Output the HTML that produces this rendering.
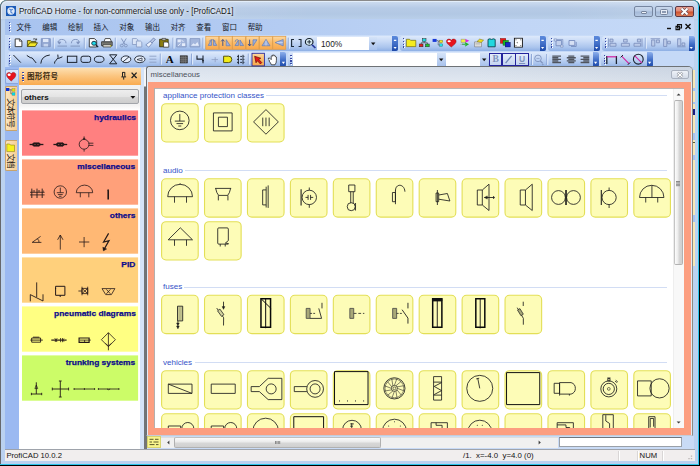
<!DOCTYPE html>
<html><head><meta charset="utf-8"><title>ProfiCAD</title>
<style>
html,body{margin:0;padding:0}
body{width:700px;height:466px;position:relative;overflow:hidden;background:#fff;font-family:"Liberation Sans",sans-serif;font-size:9px;color:#222}
div{box-sizing:border-box}
svg{position:absolute;left:0;top:0;overflow:visible}
.t{position:absolute;white-space:nowrap;line-height:1}
</style></head><body>
<div style="position:absolute;left:0px;top:0px;width:700px;height:466px;background:#000;border-radius:7px 7px 0 0;"></div><div style="position:absolute;left:0px;top:0px;width:699px;height:465px;background:#2cc4ea;border-radius:7px 6px 0 0;"></div><div style="position:absolute;left:0px;top:0px;width:698px;height:464px;background:linear-gradient(#cfddf0,#b6cbe6 7px,#b2c8e4 13px,#bbd0ea 19px,#bdd3ef 20px,#bad1f0);border-radius:7px 6px 0 0;border-left:1px solid #66686c;border-top:1px solid #8a8a8a;"></div><div style="position:absolute;left:1px;top:1px;width:697px;height:18px;border-top:1px solid #e3eefa;border-left:1px solid #dfeaf8;border-radius:6px 5px 0 0;background:linear-gradient(90deg,rgba(255,255,255,.22),rgba(255,255,255,0) 45%,rgba(255,255,255,0) 80%,rgba(255,255,255,.12));"></div><div style="position:absolute;left:6px;top:6px;width:10px;height:10px;background:#1a5ab8;border:0;"><svg width="10" height="10"><circle cx="5" cy="5" r="3.7" fill="#dfe9f8"/><path d="M3.4 2.8l1.6 1.4 1.8-1M5 4.2l-.2 2-1.8.8M4.800 6.200l1.800 1.200" stroke="#4a80d0" stroke-width="1.1" fill="none"/><circle cx="3.8" cy="6.6" r=".8" fill="#fff"/></svg></div><div class="t" style="left:19px;top:7px;font-size:8.6px;color:#141414;transform:scaleX(0.934);transform-origin:0 0;text-shadow:0 0 3px #fff,0 0 5px #eef4fc;">ProfiCAD Home - for non-commercial use only - [ProfiCAD1]</div><div style="position:absolute;left:634.3px;top:6.2px;width:18.4px;height:10.4px;border:1px solid #7686a0;border-radius:2px;background:linear-gradient(#c9d8ec,#b9cbe4 48%,#a4b9d8 52%,#b4c8e2);"><div style="position:absolute;left:5.6px;top:4.2px;width:6px;height:3px;background:#eef2f8;border:1px solid #76849c;border-radius:1px"></div></div><div style="position:absolute;left:654.5px;top:6.2px;width:18.4px;height:10.4px;border:1px solid #7686a0;border-radius:2px;background:linear-gradient(#c9d8ec,#b9cbe4 48%,#a4b9d8 52%,#b4c8e2);"><div style="position:absolute;left:4.6px;top:1.6px;width:8px;height:6px;background:#e6ecf5;border:1px solid #76849c;border-radius:1.5px"></div><div style="position:absolute;left:6.6px;top:3.6px;width:4px;height:2px;background:#8c9ab2"></div></div><div style="position:absolute;left:674.8px;top:6.2px;width:18.8px;height:10.4px;border:1px solid #5a3642;border-radius:2px;background:linear-gradient(#eba393,#e08a76 48%,#cf4f2c 52%,#de7e58);"><svg width="17" height="9"><path d="M5.5 1.5l6 6M11.5 1.5l-6 6" stroke="#6a4a52" stroke-width="3.2"/><path d="M5.5 1.5l6 6M11.5 1.5l-6 6" stroke="#fff" stroke-width="1.9"/></svg></div><div style="position:absolute;left:5px;top:19px;width:689px;height:48px;background:#c5d9f7;"></div><div style="position:absolute;left:5px;top:19px;width:689px;height:16.5px;background:linear-gradient(90deg,#a8c3ef,#b4ccf2 40%,#c1d6f6 75%,#c5d9f7);"></div><div style="position:absolute;left:5px;top:35px;width:689px;height:1px;background:#c9dcf8;"></div><div style="position:absolute;left:9.6px;top:22.60px;width:1.3px;height:1.3px;background:#fff"></div><div style="position:absolute;left:9px;top:22.00px;width:1.3px;height:1.3px;background:#3a4aa4"></div><div style="position:absolute;left:9.6px;top:25.27px;width:1.3px;height:1.3px;background:#fff"></div><div style="position:absolute;left:9px;top:24.67px;width:1.3px;height:1.3px;background:#3a4aa4"></div><div style="position:absolute;left:9.6px;top:27.94px;width:1.3px;height:1.3px;background:#fff"></div><div style="position:absolute;left:9px;top:27.34px;width:1.3px;height:1.3px;background:#3a4aa4"></div><div style="position:absolute;left:9.6px;top:30.61px;width:1.3px;height:1.3px;background:#fff"></div><div style="position:absolute;left:9px;top:30.01px;width:1.3px;height:1.3px;background:#3a4aa4"></div><svg width="700" height="466" font-family='"Liberation Sans","Noto Sans CJK SC",sans-serif' font-size="7.5" fill="#161a28"><text x="16.6" y="29.7">文件</text><text x="42.27" y="29.7">编辑</text><text x="67.94" y="29.7">绘制</text><text x="93.61" y="29.7">插入</text><text x="119.28" y="29.7">对象</text><text x="144.95" y="29.7">输出</text><text x="170.62" y="29.7">对齐</text><text x="196.29" y="29.7">查看</text><text x="221.96" y="29.7">窗口</text><text x="247.63" y="29.7">帮助</text></svg><svg width="700" height="466"><path d="M667 28.5h4" stroke="#111" stroke-width="1.4"/><path d="M677.5 24.6h4v3.4h-4zM676 26.4h3.6v3.2h-3.6z" stroke="#111" stroke-width="1.1" fill="#c5d9f7"/><path d="M685.5 24l5 5M690.5 24l-5 5" stroke="#111" stroke-width="1.4"/></svg><div style="position:absolute;left:7.5px;top:35.8px;width:390.5px;height:15.7px;border-radius:3px 2px 2px 3px;background:linear-gradient(#dde9fb,#c8daf6 35%,#abc5ed 75%,#8eafe4);overflow:hidden;"><div style="position:absolute;right:0;top:0;width:6.4px;height:15.7px;background:linear-gradient(#5c8adc,#3e6cc6 55%,#1c48a8)"></div><svg width="390.5" height="15.7"><path d="M385.9 4.4h2.4" stroke="#fff" stroke-width="1.1"/><path d="M385.5 10.899999999999999h3.2l-1.6 2.1z" fill="#fff"/></svg></div><div style="position:absolute;left:400px;top:35.8px;width:146px;height:15.7px;border-radius:3px 2px 2px 3px;background:linear-gradient(#dde9fb,#c8daf6 35%,#abc5ed 75%,#8eafe4);overflow:hidden;"><div style="position:absolute;right:0;top:0;width:6.4px;height:15.7px;background:linear-gradient(#5c8adc,#3e6cc6 55%,#1c48a8)"></div><svg width="146" height="15.7"><path d="M141.4 4.4h2.4" stroke="#fff" stroke-width="1.1"/><path d="M141 10.899999999999999h3.2l-1.6 2.1z" fill="#fff"/></svg></div><div style="position:absolute;left:548px;top:35.8px;width:52px;height:15.7px;border-radius:3px 2px 2px 3px;background:linear-gradient(#dde9fb,#c8daf6 35%,#abc5ed 75%,#8eafe4);overflow:hidden;"><div style="position:absolute;right:0;top:0;width:6.4px;height:15.7px;background:linear-gradient(#5c8adc,#3e6cc6 55%,#1c48a8)"></div><svg width="52" height="15.7"><path d="M47.4 4.4h2.4" stroke="#fff" stroke-width="1.1"/><path d="M47 10.899999999999999h3.2l-1.6 2.1z" fill="#fff"/></svg></div><div style="position:absolute;left:602.4px;top:35.8px;width:92.6px;height:15.7px;border-radius:3px 2px 2px 3px;background:linear-gradient(#dde9fb,#c8daf6 35%,#abc5ed 75%,#8eafe4);overflow:hidden;"><div style="position:absolute;right:0;top:0;width:6.4px;height:15.7px;background:linear-gradient(#8eb0ec,#3e6cc6 55%,#1c48a8)"></div><svg width="92.6" height="15.7"><path d="M88.0 4.4h2.4" stroke="#fff" stroke-width="0"/><path d="M87.6 10.899999999999999h3.2l-1.6 2.1z" fill="#fff"/></svg></div><div style="position:absolute;left:7.5px;top:52.4px;width:278.8px;height:14.6px;border-radius:3px 2px 2px 3px;background:linear-gradient(#dde9fb,#c8daf6 35%,#abc5ed 75%,#8eafe4);overflow:hidden;"><div style="position:absolute;right:0;top:0;width:6.4px;height:14.6px;background:linear-gradient(#8eb0ec,#3e6cc6 55%,#1c48a8)"></div><svg width="278.8" height="14.6"><path d="M274.2 4.4h2.4" stroke="#fff" stroke-width="0"/><path d="M273.8 9.8h3.2l-1.6 2.1z" fill="#fff"/></svg></div><div style="position:absolute;left:288px;top:52.4px;width:311px;height:14.6px;border-radius:3px 2px 2px 3px;background:linear-gradient(#dde9fb,#c8daf6 35%,#abc5ed 75%,#8eafe4);overflow:hidden;"><div style="position:absolute;right:0;top:0;width:6.4px;height:14.6px;background:linear-gradient(#8eb0ec,#3e6cc6 55%,#1c48a8)"></div><svg width="311" height="14.6"><path d="M306.4 4.4h2.4" stroke="#fff" stroke-width="0"/><path d="M306 9.8h3.2l-1.6 2.1z" fill="#fff"/></svg></div><div style="position:absolute;left:601px;top:52.4px;width:52px;height:14.6px;border-radius:3px 2px 2px 3px;background:linear-gradient(#dde9fb,#c8daf6 35%,#abc5ed 75%,#8eafe4);overflow:hidden;"><div style="position:absolute;right:0;top:0;width:6.4px;height:14.6px;background:linear-gradient(#8eb0ec,#3e6cc6 55%,#1c48a8)"></div><svg width="52" height="14.6"><path d="M47.4 4.4h2.4" stroke="#fff" stroke-width="0"/><path d="M47 9.8h3.2l-1.6 2.1z" fill="#fff"/></svg></div><div style="position:absolute;left:9.799999999999999px;top:38.80px;width:1.3px;height:1.3px;background:#fff"></div><div style="position:absolute;left:9.2px;top:38.20px;width:1.3px;height:1.3px;background:#3a4aa4"></div><div style="position:absolute;left:9.799999999999999px;top:41.55px;width:1.3px;height:1.3px;background:#fff"></div><div style="position:absolute;left:9.2px;top:40.95px;width:1.3px;height:1.3px;background:#3a4aa4"></div><div style="position:absolute;left:9.799999999999999px;top:44.30px;width:1.3px;height:1.3px;background:#fff"></div><div style="position:absolute;left:9.2px;top:43.70px;width:1.3px;height:1.3px;background:#3a4aa4"></div><div style="position:absolute;left:9.799999999999999px;top:47.05px;width:1.3px;height:1.3px;background:#fff"></div><div style="position:absolute;left:9.2px;top:46.45px;width:1.3px;height:1.3px;background:#3a4aa4"></div><div style="position:absolute;left:9.799999999999999px;top:55.80px;width:1.3px;height:1.3px;background:#fff"></div><div style="position:absolute;left:9.2px;top:55.20px;width:1.3px;height:1.3px;background:#3a4aa4"></div><div style="position:absolute;left:9.799999999999999px;top:58.40px;width:1.3px;height:1.3px;background:#fff"></div><div style="position:absolute;left:9.2px;top:57.80px;width:1.3px;height:1.3px;background:#3a4aa4"></div><div style="position:absolute;left:9.799999999999999px;top:61.00px;width:1.3px;height:1.3px;background:#fff"></div><div style="position:absolute;left:9.2px;top:60.40px;width:1.3px;height:1.3px;background:#3a4aa4"></div><div style="position:absolute;left:9.799999999999999px;top:63.60px;width:1.3px;height:1.3px;background:#fff"></div><div style="position:absolute;left:9.2px;top:63.00px;width:1.3px;height:1.3px;background:#3a4aa4"></div><div style="position:absolute;left:403.6px;top:38.80px;width:1.3px;height:1.3px;background:#fff"></div><div style="position:absolute;left:403px;top:38.20px;width:1.3px;height:1.3px;background:#3a4aa4"></div><div style="position:absolute;left:403.6px;top:41.55px;width:1.3px;height:1.3px;background:#fff"></div><div style="position:absolute;left:403px;top:40.95px;width:1.3px;height:1.3px;background:#3a4aa4"></div><div style="position:absolute;left:403.6px;top:44.30px;width:1.3px;height:1.3px;background:#fff"></div><div style="position:absolute;left:403px;top:43.70px;width:1.3px;height:1.3px;background:#3a4aa4"></div><div style="position:absolute;left:403.6px;top:47.05px;width:1.3px;height:1.3px;background:#fff"></div><div style="position:absolute;left:403px;top:46.45px;width:1.3px;height:1.3px;background:#3a4aa4"></div><div style="position:absolute;left:551.6px;top:38.80px;width:1.3px;height:1.3px;background:#fff"></div><div style="position:absolute;left:551px;top:38.20px;width:1.3px;height:1.3px;background:#3a4aa4"></div><div style="position:absolute;left:551.6px;top:41.55px;width:1.3px;height:1.3px;background:#fff"></div><div style="position:absolute;left:551px;top:40.95px;width:1.3px;height:1.3px;background:#3a4aa4"></div><div style="position:absolute;left:551.6px;top:44.30px;width:1.3px;height:1.3px;background:#fff"></div><div style="position:absolute;left:551px;top:43.70px;width:1.3px;height:1.3px;background:#3a4aa4"></div><div style="position:absolute;left:551.6px;top:47.05px;width:1.3px;height:1.3px;background:#fff"></div><div style="position:absolute;left:551px;top:46.45px;width:1.3px;height:1.3px;background:#3a4aa4"></div><div style="position:absolute;left:605.6px;top:38.80px;width:1.3px;height:1.3px;background:#fff"></div><div style="position:absolute;left:605px;top:38.20px;width:1.3px;height:1.3px;background:#3a4aa4"></div><div style="position:absolute;left:605.6px;top:41.55px;width:1.3px;height:1.3px;background:#fff"></div><div style="position:absolute;left:605px;top:40.95px;width:1.3px;height:1.3px;background:#3a4aa4"></div><div style="position:absolute;left:605.6px;top:44.30px;width:1.3px;height:1.3px;background:#fff"></div><div style="position:absolute;left:605px;top:43.70px;width:1.3px;height:1.3px;background:#3a4aa4"></div><div style="position:absolute;left:605.6px;top:47.05px;width:1.3px;height:1.3px;background:#fff"></div><div style="position:absolute;left:605px;top:46.45px;width:1.3px;height:1.3px;background:#3a4aa4"></div><div style="position:absolute;left:290.90000000000003px;top:55.80px;width:1.3px;height:1.3px;background:#fff"></div><div style="position:absolute;left:290.3px;top:55.20px;width:1.3px;height:1.3px;background:#3a4aa4"></div><div style="position:absolute;left:290.90000000000003px;top:58.40px;width:1.3px;height:1.3px;background:#fff"></div><div style="position:absolute;left:290.3px;top:57.80px;width:1.3px;height:1.3px;background:#3a4aa4"></div><div style="position:absolute;left:290.90000000000003px;top:61.00px;width:1.3px;height:1.3px;background:#fff"></div><div style="position:absolute;left:290.3px;top:60.40px;width:1.3px;height:1.3px;background:#3a4aa4"></div><div style="position:absolute;left:290.90000000000003px;top:63.60px;width:1.3px;height:1.3px;background:#fff"></div><div style="position:absolute;left:290.3px;top:63.00px;width:1.3px;height:1.3px;background:#3a4aa4"></div><div style="position:absolute;left:604.6px;top:55.80px;width:1.3px;height:1.3px;background:#fff"></div><div style="position:absolute;left:604px;top:55.20px;width:1.3px;height:1.3px;background:#3a4aa4"></div><div style="position:absolute;left:604.6px;top:58.40px;width:1.3px;height:1.3px;background:#fff"></div><div style="position:absolute;left:604px;top:57.80px;width:1.3px;height:1.3px;background:#3a4aa4"></div><div style="position:absolute;left:604.6px;top:61.00px;width:1.3px;height:1.3px;background:#fff"></div><div style="position:absolute;left:604px;top:60.40px;width:1.3px;height:1.3px;background:#3a4aa4"></div><div style="position:absolute;left:604.6px;top:63.60px;width:1.3px;height:1.3px;background:#fff"></div><div style="position:absolute;left:604px;top:63.00px;width:1.3px;height:1.3px;background:#3a4aa4"></div><div style="position:absolute;left:317px;top:37px;width:52px;height:12.6px;background:#fff;"></div><div style="position:absolute;left:369px;top:37px;width:8px;height:12.6px;background:linear-gradient(#d5e3f8,#a8c2ec);"><svg width="8" height="13"><path d="M2 5.6h4.4l-2.2 2.6z" fill="#111"/></svg></div><div class="t" style="left:321px;top:39.6px;font-size:8.3px;color:#222">100%</div><div style="position:absolute;left:293px;top:53px;width:144px;height:13px;background:#fff;"></div><div style="position:absolute;left:437px;top:53px;width:8px;height:13px;background:linear-gradient(#d5e3f8,#a8c2ec);"><svg width="8" height="13"><path d="M2 5.6h4.4l-2.2 2.6z" fill="#111"/></svg></div><div style="position:absolute;left:446px;top:53px;width:34px;height:13px;background:#fff;"></div><div style="position:absolute;left:480px;top:53px;width:8px;height:13px;background:linear-gradient(#d5e3f8,#a8c2ec);"><svg width="8" height="13"><path d="M2 5.6h4.4l-2.2 2.6z" fill="#111"/></svg></div><div style="position:absolute;left:293px;top:66px;width:196px;height:1px;background:#8a8d93;"></div><div style="position:absolute;left:5px;top:67px;width:14px;height:382px;background:#9bb9f1;"></div><div style="position:absolute;left:19px;top:67px;width:129px;height:382px;background:#c8daf5;"></div><div style="position:absolute;left:5px;top:69px;width:13px;height:15px;background:linear-gradient(#dfe9fb,#b9cff4);border:1px solid #8aa6dc;border-right:0;border-radius:2px 0 0 2px;"></div><svg width="700" height="466"><g transform="translate(6.3,72) scale(0.98)"><path d="M5 9.2C1.5 6.3 0.3 4.6 0.3 2.9 0.3 1.4 1.4 0.4 2.7 0.4 3.7 0.4 4.5 1 5 1.8 5.5 1 6.3 0.4 7.3 0.4 8.6 0.4 9.7 1.4 9.7 2.9 9.7 4.6 8.5 6.3 5 9.2z" fill="#e8121c" stroke="#8c0a10" stroke-width="0.5"/><ellipse cx="2.9" cy="2.8" rx="1.6" ry="1.2" fill="#fff"/></g></svg><div style="position:absolute;left:4.8px;top:86px;width:12.2px;height:44.6px;background:linear-gradient(90deg,#fbe3bd,#f6cf95);border:1px solid #c9a36a;border-right:0;border-radius:2px 0 0 2px;"></div><svg width="700" height="466"><rect x="6" y="88" width="3.4" height="3" fill="#1030d0"/><rect x="12" y="88.6" width="3" height="2.8" fill="#e8e000" stroke="#666" stroke-width=".3"/><rect x="12" y="92.6" width="3" height="2.8" fill="#00e0e8" stroke="#666" stroke-width=".3"/><path d="M9.4 89.6h1.4v4.200h1.200M10.800 89.900h1.200" stroke="#333" stroke-width=".5" fill="none"/><g transform="translate(15.5,98.2) rotate(90)"><text x="0 7.15 14.3 21.45" y="7.2" font-size="8.2" fill="#2a2418" font-family='"Liberation Sans","Noto Sans CJK SC",sans-serif'>文本符号</text></g></svg><div style="position:absolute;left:4.8px;top:140px;width:12.2px;height:31.2px;background:linear-gradient(90deg,#fbe3bd,#f6cf95);border:1px solid #c9a36a;border-right:0;border-radius:2px 0 0 2px;"></div><svg width="700" height="466"><path d="M6.8 144h2.8l.9 1.100h4v6.500h-7.700z" fill="#f6f01c" stroke="#8a8416" stroke-width=".6"/><g transform="translate(15.5,153.4) rotate(90)"><text x="0 7.15" y="7.2" font-size="8.2" fill="#2a2418" font-family='"Liberation Sans","Noto Sans CJK SC",sans-serif'>文档</text></g></svg><div style="position:absolute;left:19px;top:68px;width:120.6px;height:381px;background:#fff;"></div><div style="position:absolute;left:139.6px;top:68px;width:4.8px;height:381px;background:#d5e3f7;"></div><div style="position:absolute;left:144px;top:67px;width:2.6px;height:382px;background:linear-gradient(#dfe6f2,#dfe6f2 2px,#f4f6fa 3px,#f4f6fa 19px,#727476 20px,#727476);"></div><div style="position:absolute;left:19px;top:84.5px;width:120.6px;height:25px;background:linear-gradient(#f1f1f1,#f3f3f3 80%,#fff);"></div><div style="position:absolute;left:19px;top:68px;width:122.2px;height:16.5px;background:linear-gradient(#fde0b2,#fbc681 45%,#f9ab50);"></div><div style="position:absolute;left:22.900000000000002px;top:72.60px;width:1.3px;height:1.3px;background:#fff"></div><div style="position:absolute;left:22.3px;top:72.00px;width:1.3px;height:1.3px;background:#3a4aa4"></div><div style="position:absolute;left:22.900000000000002px;top:75.27px;width:1.3px;height:1.3px;background:#fff"></div><div style="position:absolute;left:22.3px;top:74.67px;width:1.3px;height:1.3px;background:#3a4aa4"></div><div style="position:absolute;left:22.900000000000002px;top:77.94px;width:1.3px;height:1.3px;background:#fff"></div><div style="position:absolute;left:22.3px;top:77.34px;width:1.3px;height:1.3px;background:#3a4aa4"></div><div style="position:absolute;left:22.900000000000002px;top:80.61px;width:1.3px;height:1.3px;background:#fff"></div><div style="position:absolute;left:22.3px;top:80.01px;width:1.3px;height:1.3px;background:#3a4aa4"></div><svg width="700" height="466"><text x="27 34.85 42.7 50.55" y="79.1" font-size="7.6" font-weight="bold" fill="#3a2a10" font-family='"Liberation Sans","Noto Sans CJK SC",sans-serif'>图形符号</text><path d="M122.5 72.2v4.6M124.8 72.2v4.6M122.5 72.4h2.3M121.3 76.9h4.8M123.7 77v2.6" stroke="#222" stroke-width="1" fill="none"/><path d="M131.6 72.6l5 5.4M136.6 72.6l-5 5.4" stroke="#222" stroke-width="1.3"/></svg><div style="position:absolute;left:20.8px;top:89px;width:118.2px;height:15.4px;border:1px solid #a2a5aa;border-radius:2px;background:linear-gradient(#eeeeee,#e4e4e4 50%,#d8d8d8 52%,#cdcdcd);"><div class="t" style="left:2.4px;top:3.6px;font-size:8px;font-weight:bold;color:#111">others</div><svg width="116" height="14"><path d="M108.4 6h5l-2.5 2.8z" fill="#111"/></svg></div><svg width="700" height="466"><rect x="22" y="110.4" width="116.1" height="45.3" fill="#ff8080"/><rect x="22" y="159.4" width="116.1" height="45.3" fill="#ffa07a"/><rect x="22" y="208.4" width="116.1" height="45.3" fill="#ffb874"/><rect x="22" y="257.4" width="116.1" height="45.3" fill="#ffd07c"/><rect x="22" y="306.4" width="116.1" height="45.3" fill="#ffff82"/><rect x="22" y="355.4" width="116.1" height="45.3" fill="#ccfc68"/></svg><div class="t" style="right:564.4px;top:113.8px;font-size:8px;font-weight:bold;color:#0a0a8c;transform:scaleX(1.05);transform-origin:100% 0;-webkit-text-stroke:0.25px #0a0a8c">hydraulics</div><div class="t" style="right:564.4px;top:162.8px;font-size:8px;font-weight:bold;color:#0a0a8c;transform:scaleX(1.05);transform-origin:100% 0;-webkit-text-stroke:0.25px #0a0a8c">miscellaneous</div><div class="t" style="right:564.4px;top:211.8px;font-size:8px;font-weight:bold;color:#0a0a8c;transform:scaleX(1.05);transform-origin:100% 0;-webkit-text-stroke:0.25px #0a0a8c">others</div><div class="t" style="right:564.4px;top:260.8px;font-size:8px;font-weight:bold;color:#0a0a8c;transform:scaleX(1.05);transform-origin:100% 0;-webkit-text-stroke:0.25px #0a0a8c">PID</div><div class="t" style="right:564.4px;top:309.8px;font-size:8px;font-weight:bold;color:#0a0a8c;transform:scaleX(1.05);transform-origin:100% 0;-webkit-text-stroke:0.25px #0a0a8c">pneumatic diagrams</div><div class="t" style="right:564.4px;top:358.8px;font-size:8px;font-weight:bold;color:#0a0a8c;transform:scaleX(1.05);transform-origin:100% 0;-webkit-text-stroke:0.25px #0a0a8c">trunking systems</div><div style="position:absolute;left:146.2px;top:66.4px;width:546.4px;height:369.4px;background:#e3ebf6;border:1px solid #6e7276;border-right-color:#8a8c84;border-bottom-color:#c4ccd8;border-radius:3px 5px 0 0;"></div><div style="position:absolute;left:147.5px;top:67.3px;width:544px;height:14.5px;background:linear-gradient(90deg,rgba(255,255,255,.12),rgba(255,255,255,0) 60%,rgba(120,135,160,.10)),linear-gradient(#d4dde9,#e1e8f1);border-radius:2px 4px 0 0;"></div><div class="t" style="left:150.6px;top:71px;font-size:7.8px;color:#4c515a">miscellaneous</div><div style="position:absolute;left:671px;top:69.8px;width:18px;height:9.6px;border:1px solid #aab2c0;border-radius:2px;background:linear-gradient(#eef2f8,#d5dce8);"><svg width="16" height="8"><path d="M5.6 1.6l4.8 4.6M10.4 1.6l-4.8 4.6" stroke="#8c929c" stroke-width="2.6"/><path d="M5.6 1.6l4.8 4.6M10.4 1.6l-4.8 4.6" stroke="#fff" stroke-width="1.2"/></svg></div><div style="position:absolute;left:147.5px;top:81.8px;width:543.5px;height:353.5px;background:#fc9e80;"></div><div style="position:absolute;left:153.8px;top:87.8px;width:530.5px;height:340px;background:#fff;"></div><div class="t" style="left:163px;top:91.6px;font-size:8.05px;color:#3553c8">appliance protection classes</div><div class="t" style="left:163px;top:167.3px;font-size:8.05px;color:#3553c8">audio</div><div class="t" style="left:163px;top:283.40000000000003px;font-size:8.05px;color:#3553c8">fuses</div><div class="t" style="left:163px;top:358.8px;font-size:8.05px;color:#3553c8">vehicles</div><svg width="700" height="466"><defs><clipPath id="cc"><rect x="154" y="88" width="519" height="339.9"/></clipPath></defs><g clip-path="url(#cc)"><rect x="266" y="95" width="401" height="1" fill="#d2ddf4"/><g transform="translate(161.10,103.20)"><rect x=".5" y=".5" width="36.6" height="38.3" rx="4.4" fill="#fdfcb7" stroke="#e3df56" stroke-width="1.1"/><g transform="translate(.4,.4)"><circle cx="18.3" cy="16.8" r="9.3" stroke="#1e1e1e" stroke-width="0.85" fill="none"/><path d="M18.3 10.5v7M13.3 17.5h10M15 20h6.6M16.8 22.4h3" stroke="#1e1e1e" stroke-width="0.85" fill="none" /></g></g><g transform="translate(204.03,103.20)"><rect x=".5" y=".5" width="36.6" height="38.3" rx="4.4" fill="#fdfcb7" stroke="#e3df56" stroke-width="1.1"/><g transform="translate(.4,.4)"><path d="M9 9.3h18.7v18h-18.7zM14 13.6h9v9.4h-9z" stroke="#1e1e1e" stroke-width="0.85" fill="none" /></g></g><g transform="translate(246.96,103.20)"><rect x=".5" y=".5" width="36.6" height="38.3" rx="4.4" fill="#fdfcb7" stroke="#e3df56" stroke-width="1.1"/><g transform="translate(.4,.4)"><path d="M18.6 6l12.4 12.3-12.4 12.3-12.4-12.3zM15.4 14v8.6M18.6 14v8.6M21.8 14v8.6" stroke="#1e1e1e" stroke-width="0.85" fill="none" /></g></g><rect x="185" y="170" width="482" height="1" fill="#d2ddf4"/><g transform="translate(161.10,178.30)"><rect x=".5" y=".5" width="36.6" height="38.3" rx="4.4" fill="#fdfcb7" stroke="#e3df56" stroke-width="1.1"/><g transform="translate(.4,.4)"><path d="M6.2 18A12.4 12.4 0 0 1 31 18zM13 18v6M25 18v6M18.6 5.6v-1" stroke="#1e1e1e" stroke-width="0.85" fill="none" /></g></g><g transform="translate(204.03,178.30)"><rect x=".5" y=".5" width="36.6" height="38.3" rx="4.4" fill="#fdfcb7" stroke="#e3df56" stroke-width="1.1"/><g transform="translate(.4,.4)"><path d="M10.7 9.7h16M11.2 9.7q1 5 3 7h9q2-2 3-7M13.9 16.7v5M23.5 16.7v5" stroke="#1e1e1e" stroke-width="0.85" fill="none" /></g></g><g transform="translate(246.96,178.30)"><rect x=".5" y=".5" width="36.6" height="38.3" rx="4.4" fill="#fdfcb7" stroke="#e3df56" stroke-width="1.1"/><g transform="translate(.4,.4)"><path d="M15.3 11.2h3.5v15h-3.5zM20.8 6.7v22.5M18.8 8v3.2M18.8 26.2v2.6" stroke="#1e1e1e" stroke-width="0.85" fill="none" /></g></g><g transform="translate(289.89,178.30)"><rect x=".5" y=".5" width="36.6" height="38.3" rx="4.4" fill="#fdfcb7" stroke="#e3df56" stroke-width="1.1"/><g transform="translate(.4,.4)"><path d="M10.8 10.5v16.2" stroke="#1e1e1e" stroke-width="1.1" fill="none" /><circle cx="19" cy="18.7" r="7.2" stroke="#1e1e1e" stroke-width="0.85" fill="none"/><path d="M17.8 16.2v5M20.3 16.2v5M15.2 18.7h2.6M20.3 18.7h2.6M19 8.8v2.7M19 25.9v3.2" stroke="#1e1e1e" stroke-width="0.85" fill="none" /></g></g><g transform="translate(332.82,178.30)"><rect x=".5" y=".5" width="36.6" height="38.3" rx="4.4" fill="#fdfcb7" stroke="#e3df56" stroke-width="1.1"/><g transform="translate(.4,.4)"><path d="M15.5 6.3h6.2v6.7h-6.2zM17.5 13v11.3M20 13v11.3M22.3 24.3v7.5" stroke="#1e1e1e" stroke-width="0.85" fill="none" /><circle cx="18" cy="28" r="4" stroke="#1e1e1e" stroke-width="0.85" fill="none"/></g></g><g transform="translate(375.75,178.30)"><rect x=".5" y=".5" width="36.6" height="38.3" rx="4.4" fill="#fdfcb7" stroke="#e3df56" stroke-width="1.1"/><g transform="translate(.4,.4)"><path d="M16.3 13.8h3v9.2h-3zM19.3 11.8v13.7M19.3 12.5c-.5-8 9-8 9.5.5" stroke="#1e1e1e" stroke-width="0.85" fill="none" /></g></g><g transform="translate(418.68,178.30)"><rect x=".5" y=".5" width="36.6" height="38.3" rx="4.4" fill="#fdfcb7" stroke="#e3df56" stroke-width="1.1"/><g transform="translate(.4,.4)"><path d="M17 14.3h2.6v8.7h-2.6zM18.3 11.3v15M19.6 16.3l8.7-1.5 2.5 7.5-11.2-1.8" stroke="#1e1e1e" stroke-width="0.85" fill="none" /></g></g><g transform="translate(461.61,178.30)"><rect x=".5" y=".5" width="36.6" height="38.3" rx="4.4" fill="#fdfcb7" stroke="#e3df56" stroke-width="1.1"/><g transform="translate(.4,.4)"><path d="M15.3 11.3h5v15h-5zM20.3 11.3l6.7-5.8v26.3l-6.7-5.5M22.3 18.8h10.5M31.6 17.3v3" stroke="#1e1e1e" stroke-width="0.85" fill="none" /><path d="M22.3 18.8l3-1.6v3.2z" stroke="#1e1e1e" stroke-width="0.4" fill="#1e1e1e" /></g></g><g transform="translate(504.54,178.30)"><rect x=".5" y=".5" width="36.6" height="38.3" rx="4.4" fill="#fdfcb7" stroke="#e3df56" stroke-width="1.1"/><g transform="translate(.4,.4)"><path d="M15.3 11.3h5.2v15h-5.2zM20.5 11.3l6.8-5.8v26.3l-6.8-5.5" stroke="#1e1e1e" stroke-width="0.85" fill="none" /></g></g><g transform="translate(547.47,178.30)"><rect x=".5" y=".5" width="36.6" height="38.3" rx="4.4" fill="#fdfcb7" stroke="#e3df56" stroke-width="1.1"/><g transform="translate(.4,.4)"><circle cx="10.6" cy="18.8" r="6.9" stroke="#1e1e1e" stroke-width="0.85" fill="none"/><circle cx="25.6" cy="18.8" r="6.9" stroke="#1e1e1e" stroke-width="0.85" fill="none"/><path d="M17.7 11.3v15M18.6 11.3v15" stroke="#1e1e1e" stroke-width="0.85" fill="none" /></g></g><g transform="translate(590.40,178.30)"><rect x=".5" y=".5" width="36.6" height="38.3" rx="4.4" fill="#fdfcb7" stroke="#e3df56" stroke-width="1.1"/><g transform="translate(.4,.4)"><path d="M10.5 11.3v15" stroke="#1e1e1e" stroke-width="1.1" fill="none" /><circle cx="18.3" cy="18.8" r="7.1" stroke="#1e1e1e" stroke-width="0.85" fill="none"/><path d="M18.3 8.8v2.9M18.3 25.9v3.4" stroke="#1e1e1e" stroke-width="0.85" fill="none" /></g></g><g transform="translate(633.33,178.30)"><rect x=".5" y=".5" width="36.6" height="38.3" rx="4.4" fill="#fdfcb7" stroke="#e3df56" stroke-width="1.1"/><g transform="translate(.4,.4)"><path d="M5.8 18.8A12.2 12.2 0 0 1 30.2 18.8zM18.2 6.6v12.2M12 18.8v5M24 18.8v5" stroke="#1e1e1e" stroke-width="0.85" fill="none" /></g></g><g transform="translate(161.10,221.20)"><rect x=".5" y=".5" width="36.6" height="38.3" rx="4.4" fill="#fdfcb7" stroke="#e3df56" stroke-width="1.1"/><g transform="translate(.4,.4)"><path d="M18.8 6.2l12.2 12H6.7zM13 18.2v6M25 18.2v6" stroke="#1e1e1e" stroke-width="0.85" fill="none" /></g></g><g transform="translate(204.03,221.20)"><rect x=".5" y=".5" width="36.6" height="38.3" rx="4.4" fill="#fdfcb7" stroke="#e3df56" stroke-width="1.1"/><g transform="translate(.4,.4)"><path d="M14.3 6.3h8.4q1.2 0 1.2 1.2v11.5l-3 2.5 3 .4v.6h-9.6q-1 0-1-1v-14.2q0-1 1-1zM15.8 22.5v2.4M20.8 22.5v2.4" stroke="#1e1e1e" stroke-width="0.85" fill="none" /></g></g><rect x="184" y="287" width="483" height="1" fill="#d2ddf4"/><g transform="translate(161.10,294.80)"><rect x=".5" y=".5" width="36.6" height="38.3" rx="4.4" fill="#fdfcb7" stroke="#e3df56" stroke-width="1.1"/><g transform="translate(.4,.4)"><path d="M16 11h5.2v14.700h-5.200z" stroke="#1e1e1e" stroke-width="0.85" fill="#d2d29c" /><path d="M17.700 11.600v13.600M19.400 11.600v13.600" stroke="#8c8c5c" stroke-width="0.5" fill="none" /><path d="M16.400 25.700v7.800" stroke="#1e1e1e" stroke-width="0.85" fill="none" /><path d="M14.900 27.800h3l-1.500 2.600zM14.900 30.800h3l-1.500 2.600z" stroke="#1e1e1e" stroke-width="0.3" fill="#1e1e1e" /></g></g><g transform="translate(204.03,294.80)"><rect x=".5" y=".5" width="36.6" height="38.3" rx="4.4" fill="#fdfcb7" stroke="#e3df56" stroke-width="1.1"/><g transform="translate(.4,.4)"><path d="M19.100 6.500v6M19.200 22.600l-.100 7.700M12.300 12.900l7 9.700" stroke="#1e1e1e" stroke-width="0.85" fill="none" /><path d="M17.600 11.400h3l-1.500 2.800z" stroke="#1e1e1e" stroke-width="0.3" fill="#1e1e1e" /><path d="M13.100 15.600l2.400-1.700 4 5.600-2.400 1.700z" stroke="#1e1e1e" stroke-width="0.75" fill="#d2d29c" /></g></g><g transform="translate(246.96,294.80)"><rect x=".5" y=".5" width="36.6" height="38.3" rx="4.4" fill="#fdfcb7" stroke="#e3df56" stroke-width="1.1"/><g transform="translate(.4,.4)"><path d="M13.6 3.6h9.6v28.4h-9.6z" stroke="#0a0a0a" stroke-width="1.5" fill="none" /><path d="M18.3 3.4v29.6M14.2 4l9.6 9.4" stroke="#0a0a0a" stroke-width="1.0" fill="none" /></g></g><g transform="translate(289.89,294.80)"><rect x=".5" y=".5" width="36.6" height="38.3" rx="4.4" fill="#fdfcb7" stroke="#e3df56" stroke-width="1.1"/><g transform="translate(.4,.4)"><path d="M15.900 13.200h3.900v10h-3.900z" stroke="#444" stroke-width="0.8" fill="#a8a878" /><path d="M19.800 18.200h5" stroke="#1e1e1e" stroke-width="0.8" fill="none" stroke-dasharray="2 1.200"/><path d="M19.800 23.200h11.500l-2.800-10M31.700 7.600v5.600" stroke="#1e1e1e" stroke-width="0.85" fill="none" /></g></g><g transform="translate(332.82,294.80)"><rect x=".5" y=".5" width="36.6" height="38.3" rx="4.4" fill="#fdfcb7" stroke="#e3df56" stroke-width="1.1"/><g transform="translate(.4,.4)"><path d="M16.600 13.200h3.900v10h-3.900z" stroke="#444" stroke-width="0.8" fill="#a8a878" /><path d="M20.500 18.200h10.600" stroke="#1e1e1e" stroke-width="0.8" fill="none" stroke-dasharray="2.800 1.800"/></g></g><g transform="translate(375.75,294.80)"><rect x=".5" y=".5" width="36.6" height="38.3" rx="4.4" fill="#fdfcb7" stroke="#e3df56" stroke-width="1.1"/><g transform="translate(.4,.4)"><path d="M16.500 13.200h4v10h-4z" stroke="#444" stroke-width="0.8" fill="#a8a878" /><path d="M20.500 18.200h5.400" stroke="#1e1e1e" stroke-width="0.8" fill="none" stroke-dasharray="2 1.200"/><path d="M25.900 14.500l5.900 8.400M31.800 7.600v5.600M31.800 22.900v5.500" stroke="#1e1e1e" stroke-width="0.9" fill="none" /></g></g><g transform="translate(418.68,294.80)"><rect x=".5" y=".5" width="36.6" height="38.3" rx="4.4" fill="#fdfcb7" stroke="#e3df56" stroke-width="1.1"/><g transform="translate(.4,.4)"><path d="M13.6 3.6h9.2v28.4h-9.2z" stroke="#0a0a0a" stroke-width="1.5" fill="none" /><path d="M13.4 3.4h9.4v2.4h-9.4z" stroke="#111" stroke-width="0.8" fill="#111" /><path d="M18.2 3.4v29.4" stroke="#111" stroke-width="0.9" fill="none" /></g></g><g transform="translate(461.61,294.80)"><rect x=".5" y=".5" width="36.6" height="38.3" rx="4.4" fill="#fdfcb7" stroke="#e3df56" stroke-width="1.1"/><g transform="translate(.4,.4)"><path d="M13.8 3.6h9v28.400h-9z" stroke="#0a0a0a" stroke-width="1.5" fill="none" /><path d="M18.2 3.4v29.8" stroke="#111" stroke-width="0.9" fill="none" /></g></g><g transform="translate(504.54,294.80)"><rect x=".5" y=".5" width="36.6" height="38.3" rx="4.4" fill="#fdfcb7" stroke="#e3df56" stroke-width="1.1"/><g transform="translate(.4,.4)"><path d="M18.3 6.5v4.3M18.4 23.3v6.2M12.3 12.5l6.2 10.8" stroke="#1e1e1e" stroke-width="0.85" fill="none" /><path d="M12.6 14.9l2.4-1.5 3.4 5.6-2.4 1.5z" stroke="#1e1e1e" stroke-width="0.7" fill="#a8a878" /></g></g><rect x="195" y="362" width="472" height="1" fill="#d2ddf4"/><g transform="translate(161.10,370.20)"><rect x=".5" y=".5" width="36.6" height="38.3" rx="4.4" fill="#fdfcb7" stroke="#e3df56" stroke-width="1.1"/><g transform="translate(.4,.4)"><path d="M6.8 13.5h23.7v9.3h-23.7zM6.8 13.5l23.7 9.3" stroke="#1e1e1e" stroke-width="0.85" fill="none" /></g></g><g transform="translate(204.03,370.20)"><rect x=".5" y=".5" width="36.6" height="38.3" rx="4.4" fill="#fdfcb7" stroke="#e3df56" stroke-width="1.1"/><g transform="translate(.4,.4)"><path d="M6.8 13.5h24v9.3h-24z" stroke="#1e1e1e" stroke-width="0.85" fill="none" /></g></g><g transform="translate(246.96,370.20)"><rect x=".5" y=".5" width="36.6" height="38.3" rx="4.4" fill="#fdfcb7" stroke="#e3df56" stroke-width="1.1"/><g transform="translate(.4,.4)"><path d="M3.8 16h8.2l8.8-8.3h13.7v21.3h-13.7l-8.8-8h-8.2z" stroke="#1e1e1e" stroke-width="0.85" fill="none" /><circle cx="23.8" cy="18.3" r="5" stroke="#1e1e1e" stroke-width="0.85" fill="none"/></g></g><g transform="translate(289.89,370.20)"><rect x=".5" y=".5" width="36.6" height="38.3" rx="4.4" fill="#fdfcb7" stroke="#e3df56" stroke-width="1.1"/><g transform="translate(.4,.4)"><path d="M16.6 16h-12.6v5h12.6" stroke="#1e1e1e" stroke-width="0.85" fill="none" /><circle cx="24.8" cy="18.3" r="8.4" stroke="#1e1e1e" stroke-width="0.85" fill="none"/><circle cx="24.8" cy="18.3" r="5" stroke="#1e1e1e" stroke-width="0.85" fill="none"/></g></g><g transform="translate(332.82,370.20)"><rect x=".5" y=".5" width="36.6" height="38.3" rx="4.4" fill="#fdfcb7" stroke="#e3df56" stroke-width="1.1"/><g transform="translate(.4,.4)"><path d="M1.3 1h33.5v33h-33.5z" stroke="#111" stroke-width="1.0" fill="none" /><path d="M6.3 30.3h.01M14.3 30.3h.01M22.3 30.3h.01M30.4 30.3h.01" stroke="#333" stroke-width="1.1" fill="none" stroke-linecap="round"/></g></g><g transform="translate(375.75,370.20)"><rect x=".5" y=".5" width="36.6" height="38.3" rx="4.4" fill="#fdfcb7" stroke="#e3df56" stroke-width="1.1"/><g transform="translate(.4,.4)"><circle cx="18.25" cy="17.75" r="10.6" stroke="#1e1e1e" stroke-width="0.85" fill="none"/><circle cx="18.25" cy="17.75" r="9.4" stroke="#1e1e1e" stroke-width="0.5" fill="none"/><circle cx="18.25" cy="17.75" r="3" stroke="#1e1e1e" stroke-width="0.7" fill="none"/><circle cx="18.25" cy="17.75" r="1.4" stroke="#1e1e1e" stroke-width="0.6" fill="none"/><path d="M21.25 17.75L27.55 20.13M20.85 19.25L25.12 24.46M19.75 20.35L20.84 26.99M18.25 20.75L15.87 27.05M16.75 20.35L11.54 24.62M15.65 19.25L9.01 20.34M15.25 17.75L8.95 15.37M15.65 16.25L11.38 11.04M16.75 15.15L15.66 8.51M18.25 14.75L20.63 8.45M19.75 15.15L24.96 10.88M20.85 16.25L27.49 15.16" stroke="#1e1e1e" stroke-width="0.55" fill="none" /></g></g><g transform="translate(418.68,370.20)"><rect x=".5" y=".5" width="36.6" height="38.3" rx="4.4" fill="#fdfcb7" stroke="#e3df56" stroke-width="1.1"/><g transform="translate(.4,.4)"><path d="M14.5 6h8v23.5h-8zM14.5 11.5h8M14.5 24.5h8M22.5 12l-7.4 3.8 7.4 4.2-7.4 4" stroke="#1e1e1e" stroke-width="0.85" fill="none" /></g></g><g transform="translate(461.61,370.20)"><rect x=".5" y=".5" width="36.6" height="38.3" rx="4.4" fill="#fdfcb7" stroke="#e3df56" stroke-width="1.1"/><g transform="translate(.4,.4)"><circle cx="17.75" cy="17.75" r="13" stroke="#1e1e1e" stroke-width="0.85" fill="none"/><path d="M17.75 17.75l-2-10M14.2 8.3l3-.7" stroke="#1e1e1e" stroke-width="0.85" fill="none" /></g></g><g transform="translate(504.54,370.20)"><rect x=".5" y=".5" width="36.6" height="38.3" rx="4.4" fill="#fdfcb7" stroke="#e3df56" stroke-width="1.1"/><g transform="translate(.4,.4)"><path d="M1.6 2h33.2v32h-33.2z" stroke="#111" stroke-width="1.0" fill="none" /></g></g><g transform="translate(547.47,370.20)"><rect x=".5" y=".5" width="36.6" height="38.3" rx="4.4" fill="#fdfcb7" stroke="#e3df56" stroke-width="1.1"/><g transform="translate(.4,.4)"><path d="M6.3 12.7h5.4v10h-5.4zM11.7 12h11.5a6 6 0 0 1 0 11.5h-11.5zM11.7 23.5v1.5M21.5 23.5v1.5" stroke="#1e1e1e" stroke-width="0.85" fill="none" /></g></g><g transform="translate(590.40,370.20)"><rect x=".5" y=".5" width="36.6" height="38.3" rx="4.4" fill="#fdfcb7" stroke="#e3df56" stroke-width="1.1"/><g transform="translate(.4,.4)"><circle cx="18" cy="18.3" r="8" stroke="#1e1e1e" stroke-width="0.85" fill="none"/><circle cx="18" cy="18.3" r="5.6" stroke="#1e1e1e" stroke-width="0.85" fill="none"/><circle cx="18" cy="18.3" r="1.4" stroke="#1e1e1e" stroke-width="0.6" fill="none"/><path d="M17 8h2.2v2.3h-2.2zM16.5 7.4h3.2M24.3 10.5l1.6 1.5M25 9.6l2 1.8" stroke="#1e1e1e" stroke-width="0.85" fill="none" /></g></g><g transform="translate(633.33,370.20)"><rect x=".5" y=".5" width="36.6" height="38.3" rx="4.4" fill="#fdfcb7" stroke="#e3df56" stroke-width="1.1"/><g transform="translate(.4,.4)"><path d="M3.8 10.3h13.7v15h-13.7z" stroke="#1e1e1e" stroke-width="0.85" fill="none" /><circle cx="25.8" cy="17.75" r="9.6" stroke="#1e1e1e" stroke-width="0.85" fill="none"/></g></g><g transform="translate(161.10,413.30)"><rect x=".5" y=".5" width="36.6" height="38.3" rx="4.4" fill="#fdfcb7" stroke="#e3df56" stroke-width="1.1"/><g transform="translate(.4,.4)"><path d="M6.8 12.3h12.4v10h-12.4z" stroke="#1e1e1e" stroke-width="0.85" fill="none" /><circle cx="26.3" cy="14.8" r="6" stroke="#1e1e1e" stroke-width="0.85" fill="none"/></g></g><g transform="translate(204.03,413.30)"><rect x=".5" y=".5" width="36.6" height="38.3" rx="4.4" fill="#fdfcb7" stroke="#e3df56" stroke-width="1.1"/><g transform="translate(.4,.4)"><path d="M6.8 12.3h12.4v10h-12.4z" stroke="#1e1e1e" stroke-width="0.85" fill="none" /><circle cx="26.3" cy="14.8" r="6" stroke="#1e1e1e" stroke-width="0.85" fill="none"/></g></g><g transform="translate(246.96,413.30)"><rect x=".5" y=".5" width="36.6" height="38.3" rx="4.4" fill="#fdfcb7" stroke="#e3df56" stroke-width="1.1"/><g transform="translate(.4,.4)"><circle cx="18.3" cy="17.3" r="12.8" stroke="#1e1e1e" stroke-width="0.85" fill="none"/></g></g><g transform="translate(289.89,413.30)"><rect x=".5" y=".5" width="36.6" height="38.3" rx="4.4" fill="#fdfcb7" stroke="#e3df56" stroke-width="1.1"/><g transform="translate(.4,.4)"><path d="M3.5 3h29.8v20h-29.8z" stroke="#111" stroke-width="1.0" fill="none" /></g></g><g transform="translate(332.82,413.30)"><rect x=".5" y=".5" width="36.6" height="38.3" rx="4.4" fill="#fdfcb7" stroke="#e3df56" stroke-width="1.1"/><g transform="translate(.4,.4)"><circle cx="18.8" cy="16" r="9.4" stroke="#1e1e1e" stroke-width="0.85" fill="none"/><path d="M18.5 9.5v6M17 10.2h3.6M17 12.5h2.6" stroke="#1e1e1e" stroke-width="0.85" fill="none" /></g></g><g transform="translate(375.75,413.30)"><rect x=".5" y=".5" width="36.6" height="38.3" rx="4.4" fill="#fdfcb7" stroke="#e3df56" stroke-width="1.1"/><g transform="translate(.4,.4)"><circle cx="18.3" cy="17.5" r="12" stroke="#1e1e1e" stroke-width="0.85" fill="none"/><path d="M18.3 8h.01M12.5 12.3h.01M24.2 12.3h.01" stroke="#333" stroke-width="1.1" fill="none" stroke-linecap="round"/></g></g><g transform="translate(418.68,413.30)"><rect x=".5" y=".5" width="36.6" height="38.3" rx="4.4" fill="#fdfcb7" stroke="#e3df56" stroke-width="1.1"/><g transform="translate(.4,.4)"><path d="M12 9h16.3v10h-16.3zM17 9v2.6h6v5" stroke="#1e1e1e" stroke-width="0.85" fill="none" /></g></g><g transform="translate(461.61,413.30)"><rect x=".5" y=".5" width="36.6" height="38.3" rx="4.4" fill="#fdfcb7" stroke="#e3df56" stroke-width="1.1"/><g transform="translate(.4,.4)"><circle cx="17.8" cy="18.5" r="12" stroke="#1e1e1e" stroke-width="0.85" fill="none"/><path d="M15.3 11.5h.01M20.3 11.5h.01" stroke="#333" stroke-width="1.1" fill="none" stroke-linecap="round"/></g></g><g transform="translate(504.54,413.30)"><rect x=".5" y=".5" width="36.6" height="38.3" rx="4.4" fill="#fdfcb7" stroke="#e3df56" stroke-width="1.1"/><g transform="translate(.4,.4)"></g></g><g transform="translate(547.47,413.30)"><rect x=".5" y=".5" width="36.6" height="38.3" rx="4.4" fill="#fdfcb7" stroke="#e3df56" stroke-width="1.1"/><g transform="translate(.4,.4)"><path d="M9.3 9h16.2v10h-16.2zM9.3 11.2h8.8v2.6h3.7v5" stroke="#1e1e1e" stroke-width="0.85" fill="none" /></g></g><g transform="translate(590.40,413.30)"><rect x=".5" y=".5" width="36.6" height="38.3" rx="4.4" fill="#fdfcb7" stroke="#e3df56" stroke-width="1.1"/><g transform="translate(.4,.4)"><path d="M12 1h10.5v20h-10.5zM15 1.5v5.8l3.8 2.5v6.3" stroke="#1e1e1e" stroke-width="0.85" fill="none" /></g></g><g transform="translate(633.33,413.30)"><rect x=".5" y=".5" width="36.6" height="38.3" rx="4.4" fill="#fdfcb7" stroke="#e3df56" stroke-width="1.1"/><g transform="translate(.4,.4)"><path d="M15 3h6.3v20h-6.3zM16.5 4.8v9M16.5 4.8h3.4v8.2" stroke="#1e1e1e" stroke-width="0.85" fill="none" /></g></g></g></svg><div style="position:absolute;left:153.8px;top:87.8px;width:530.5px;height:1px;background:#b9b4b2;"></div><div style="position:absolute;left:153.8px;top:87.8px;width:1px;height:340px;background:#b4afad;"></div><div style="position:absolute;left:673px;top:88.8px;width:11.3px;height:339px;background:#f8f8f8;border-left:1px solid #eeeeee;"></div><svg width="700" height="466"><path d="M676.6 95.6l2-2.2 2 2.200z" fill="#3c3c3c"/><path d="M676.6 421.4l2 2.200 2-2.200z" fill="#3c3c3c"/></svg><div style="position:absolute;left:673.7px;top:100.3px;width:9px;height:165px;border:1px solid #b2b2b2;border-left-color:#c4c4c4;border-radius:2px;background:linear-gradient(90deg,#fcfcfc,#ececec 40%,#d6d6d6 60%,#cfcfcf);"><div style="position:absolute;left:1.6px;top:79.4px;width:3.8px;height:0.7px;background:#8a8a8a;box-shadow:0 1.4px 0 #8a8a8a,0 2.8px 0 #8a8a8a,0 4.2px 0 #8a8a8a"></div></div><div style="position:absolute;left:146.5px;top:435.8px;width:547.5px;height:13.4px;background:#c9dbf6;"></div><div style="position:absolute;left:146.5px;top:436px;width:14px;height:12px;background:#f8f48c;border:1px solid #d8d470;"><svg width="12" height="10"><path d="M1.5 2.3h4M7 2.3h3.5M1.5 5h2.5M5.5 5h5M1.5 7.6h5M8 7.6h2.5" stroke="#4a4a20" stroke-width="0.9"/></svg></div><div style="position:absolute;left:161px;top:436.6px;width:397px;height:11.6px;background:#f0f0f0;border-top:1px solid #dedede;"></div><svg width="700" height="466"><path d="M169.4 440.4l-2.2 2 2.2 2z" fill="#3c3c3c"/><path d="M538.6 440.4l2.2 2-2.2 2z" fill="#3c3c3c"/></svg><div style="position:absolute;left:174px;top:437.2px;width:207px;height:10.6px;border:1px solid #b0b0b0;border-top-color:#c0c0c0;border-radius:2px;background:linear-gradient(#fcfcfc,#ececec 40%,#d6d6d6 60%,#d0d0d0);"><div style="position:absolute;left:100px;top:2.4px;width:0.7px;height:3.8px;background:#8a8a8a;box-shadow:1.400px 0 0 #8a8a8a,2.800px 0 0 #8a8a8a,4.200px 0 0 #8a8a8a"></div></div><div style="position:absolute;left:558.6px;top:437px;width:123px;height:9.6px;background:#fff;border:1px solid #9aa0a8;border-top-color:#70757c;"></div><div style="position:absolute;left:5px;top:449.2px;width:689.6px;height:12px;background:#f1eeee;border-top:1px solid #9ea3ab;"></div><div class="t" style="left:6.4px;top:451.6px;font-size:7.7px;color:#111">ProfiCAD 10.0.2</div><div class="t" style="left:463px;top:451.6px;font-size:7.85px;color:#111;white-space:pre">/1.  x=-4.0  y=4.0 (0)</div><div class="t" style="left:639.6px;top:451.6px;font-size:7.7px;color:#111">NUM</div><div style="position:absolute;left:617.5px;top:451px;width:1px;height:9.5px;background:#d9d6d6;border-right:1px solid #fff;width:2px;"></div><div style="position:absolute;left:636.5px;top:451px;width:1px;height:9.5px;background:#d9d6d6;border-right:1px solid #fff;width:2px;"></div><div style="position:absolute;left:661.5px;top:451px;width:1px;height:9.5px;background:#d9d6d6;border-right:1px solid #fff;width:2px;"></div><svg width="700" height="466"><path d="M691.5 458.6h.01M689 458.6h.01M691.5 456.2h.01" stroke="#b9b4b4" stroke-width="1.3" stroke-linecap="square"/></svg><div class="t" style="left:165.800px;top:53.900000000000006px;font-family:'Liberation Serif',serif;font-weight:bold;font-size:11px;color:#0a0a0a">A</div><div style="position:absolute;left:489.0px;top:52.8px;width:13.4px;height:13.6px;border:1px solid #24249c;background:linear-gradient(#e4ecfa,#c4d4f0);"></div><div style="position:absolute;left:502.2px;top:52.8px;width:13.4px;height:13.6px;border:1px solid #24249c;background:linear-gradient(#e4ecfa,#c4d4f0);"></div><div style="position:absolute;left:515.4px;top:52.8px;width:13.4px;height:13.6px;border:1px solid #24249c;background:linear-gradient(#e4ecfa,#c4d4f0);"></div><div class="t" style="left:492.6px;top:55px;font-family:'Liberation Serif',serif;font-weight:bold;font-size:9.5px;color:#7f93bd">B</div><div class="t" style="left:519px;top:55.2px;font-weight:bold;font-size:8.5px;color:#7f93bd;text-decoration:underline">U</div><svg width="700" height="466"><defs><linearGradient id="og" x1="0" y1="0" x2="0" y2="1"><stop offset="0" stop-color="#fdd9a2"/><stop offset=".45" stop-color="#fbbd6c"/><stop offset="1" stop-color="#f9a84c"/></linearGradient></defs><path d="M53.3 37.699999999999996v11" stroke="#8aa4d4" stroke-width="1"/><path d="M54.3 37.699999999999996v11" stroke="#e4eefc" stroke-width="1"/><path d="M84.3 37.699999999999996v11" stroke="#8aa4d4" stroke-width="1"/><path d="M85.3 37.699999999999996v11" stroke="#e4eefc" stroke-width="1"/><path d="M115.3 37.699999999999996v11" stroke="#8aa4d4" stroke-width="1"/><path d="M116.3 37.699999999999996v11" stroke="#e4eefc" stroke-width="1"/><path d="M173 37.699999999999996v11" stroke="#8aa4d4" stroke-width="1"/><path d="M174 37.699999999999996v11" stroke="#e4eefc" stroke-width="1"/><path d="M203 37.699999999999996v11" stroke="#8aa4d4" stroke-width="1"/><path d="M204 37.699999999999996v11" stroke="#e4eefc" stroke-width="1"/><rect x="205.8" y="36.3" width="13" height="13" fill="url(#og)" stroke="#e09a40" stroke-width=".7"/><rect x="219.20000000000002" y="36.3" width="13" height="13" fill="url(#og)" stroke="#e09a40" stroke-width=".7"/><rect x="232.60000000000002" y="36.3" width="13" height="13" fill="url(#og)" stroke="#e09a40" stroke-width=".7"/><rect x="246.0" y="36.3" width="13" height="13" fill="url(#og)" stroke="#e09a40" stroke-width=".7"/><rect x="259.40000000000003" y="36.3" width="13" height="13" fill="url(#og)" stroke="#e09a40" stroke-width=".7"/><rect x="272.8" y="36.3" width="13" height="13" fill="url(#og)" stroke="#e09a40" stroke-width=".7"/><path d="M288.3 37.699999999999996v11" stroke="#8aa4d4" stroke-width="1"/><path d="M289.3 37.699999999999996v11" stroke="#e4eefc" stroke-width="1"/><path d="M645.3 37.699999999999996v11" stroke="#8aa4d4" stroke-width="1"/><path d="M646.3 37.699999999999996v11" stroke="#e4eefc" stroke-width="1"/><path d="M160.3 53.6v11" stroke="#8aa4d4" stroke-width="1"/><path d="M161.3 53.6v11" stroke="#e4eefc" stroke-width="1"/><path d="M191.6 53.6v11" stroke="#8aa4d4" stroke-width="1"/><path d="M192.6 53.6v11" stroke="#e4eefc" stroke-width="1"/><path d="M248.3 53.6v11" stroke="#8aa4d4" stroke-width="1"/><path d="M249.3 53.6v11" stroke="#e4eefc" stroke-width="1"/><rect x="252" y="53.3" width="12.4" height="12.6" fill="url(#og)" stroke="#2c2c9c" stroke-width=".9"/><path d="M531.6 54.0v11" stroke="#8aa4d4" stroke-width="1"/><path d="M532.6 54.0v11" stroke="#e4eefc" stroke-width="1"/><path d="M546.8 54.0v11" stroke="#8aa4d4" stroke-width="1"/><path d="M547.8 54.0v11" stroke="#e4eefc" stroke-width="1"/><g transform="translate(0,38.4) scale(1,0.875) translate(0,-38.3)"><path d="M15.200 38.9h4.400l2.300 2.400v6.400h-6.700z" fill="#fff" stroke="#222" stroke-width=".9"/><path d="M19.400 39.0v2.500h2.400" fill="none" stroke="#222" stroke-width=".7"/><path d="M27.4 47.599999999999994v-6.8h3l.8 1h4.6v1.6" fill="#e8d820" stroke="#3a3600" stroke-width=".8"/><path d="M27.4 47.599999999999994l2.3-4.3h7.8l-2.3 4.3z" fill="#f4e828" stroke="#3a3600" stroke-width=".8"/><path d="M33 39.099999999999994q2-1.2 3.4.6M36.6 38.3v1.8h-1.8" fill="none" stroke="#222" stroke-width=".7"/><path d="M41.3 38.599999999999994h9v9.2h-9z" fill="#92a6d0" stroke="#7389bb" stroke-width=".8"/><path d="M43 38.9h5.4v3.6h-5.4z" fill="#dfe8f8"/><path d="M43.6 44.5h4.4v3h-4.4z" fill="#c7d5ee"/><path d="M59 44.099999999999994q-1.6-4.4 2.6-4.6 4.2-.2 4.4 4.4" fill="none" stroke="#7f93bd" stroke-width="1"/><path d="M57 41.699999999999996l2.4 3.6 2-3.2z" fill="#7f93bd"/><path d="M57.5 47.099999999999994h9.5" stroke="#7f93bd" stroke-width="1"/><path d="M78.4 44.099999999999994q1.6-4.4-2.6-4.6-4.2-.2-4.4 4.4" fill="none" stroke="#7f93bd" stroke-width="1"/><path d="M80.4 41.699999999999996l-2.4 3.6-2-3.2z" fill="#7f93bd"/><path d="M70.5 47.099999999999994h9.5" stroke="#7f93bd" stroke-width="1"/><path d="M89.3 38.5h5l2.4 2.4v7.2h-7.4z" fill="#fff" stroke="#222" stroke-width=".9"/><circle cx="94" cy="43.9" r="2.3" fill="#20d8e8" stroke="#123" stroke-width=".9"/><path d="M95.8 45.8l2.4 2.4" stroke="#123" stroke-width="1.3"/><path d="M104 41.9l1.2-3.4h5l1.2 3.4" fill="#fff" stroke="#222" stroke-width=".8"/><path d="M101.6 42.099999999999994h10.6v4.6h-10.6z" fill="#8c8c84" stroke="#222" stroke-width=".8"/><path d="M103 45.5h8v2.6h-8z" fill="#e4e4dc" stroke="#222" stroke-width=".7"/><path d="M102.6 43.5h8.6" stroke="#333" stroke-width=".6"/><path d="M110 46.9h1.4" stroke="#e8e020" stroke-width="1"/><path d="M121.3 38.3l3.6 6.8M126.3 38.3l-3.6 6.8" stroke="#7f93bd" stroke-width="1"/><circle cx="121.8" cy="46.5" r="1.5" fill="none" stroke="#7f93bd" stroke-width=".9"/><circle cx="125.8" cy="46.5" r="1.5" fill="none" stroke="#7f93bd" stroke-width=".9"/><path d="M132.4 38.5h4l1.4 1.4v5.4h-5.4z" fill="#dbe5f6" stroke="#7f93bd" stroke-width=".8"/><path d="M136.4 41.3h4l1.4 1.4v5.4h-5.4z" fill="#dbe5f6" stroke="#7f93bd" stroke-width=".8"/><path d="M153.4 37.9l2 1.6-3.6 4.2-1.8-1.6z" fill="#b9c8e6" stroke="#5870a4" stroke-width=".7"/><path d="M150.2 41.9l2 1.8-3.4 4.6-3-2.6z" fill="#eef3fc" stroke="#5870a4" stroke-width=".7"/><path d="M159.6 39.3h8.6v8.6h-8.6z" fill="#8a7c10" stroke="#2a2600" stroke-width=".8"/><path d="M162 38.3h3.8v2h-3.8z" fill="#d0d0d0" stroke="#222" stroke-width=".6"/><path d="M163.6 42.5h3.6l1.6 1.6v4.2h-5.2z" fill="#fff" stroke="#222" stroke-width=".7"/><path d="M176.6 38.5h9.6v9.6h-9.6z" fill="#a3b6dc" stroke="#7f93bd" stroke-width=".8"/><path d="M177.6 39.5h3.2v3.2h-3.2zM182 43.9h3.2v3.2h-3.2z" fill="#e4ecfa"/><path d="M181.4 39.9l2.2 2.6M178 46.9l2.6-2.8" stroke="#e4ecfa" stroke-width="1"/><path d="M190 38.5h9.8v9.6h-9.8z" fill="#a3b6dc" stroke="#7f93bd" stroke-width=".8"/><path d="M191 46.699999999999996l2.4-3 1.8 1.6 2.2-3 1.6 4.4z" fill="#e4ecfa"/><path d="M208.20000000000002 46.3l3.2-6.6 .1 6.6zM216.8 46.3l-3.4-6.6v6.6z" fill="#9db0dc" stroke="#5a78b8" stroke-width=".7"/><path d="M208.8 41.8q3.6-4 7 0" fill="none" stroke="#5a78b8" stroke-width=".7"/><path d="M222.8 46.9v-7M221.20000000000002 41.699999999999996l1.6-2.2 1.6 2.2" fill="none" stroke="#2b468c" stroke-width=".9"/><path d="M226.20000000000002 46.699999999999996v-7l4 7z" fill="#9db0dc" stroke="#5a78b8" stroke-width=".7"/><path d="M235.00000000000003 46.5l3.4-6.4v6.4zM243.60000000000002 46.5l-3.6-6.4v6.4z" fill="#9db0dc" stroke="#5a78b8" stroke-width=".7"/><path d="M235.20000000000002 42.3q-.4-2.6 2.6-2.8" fill="none" stroke="#5a78b8" stroke-width=".7"/><path d="M249.60000000000002 39.699999999999996v7M248.00000000000003 44.699999999999996l1.6 2.2 1.6-2.2" fill="none" stroke="#2b468c" stroke-width=".9"/><path d="M253.00000000000003 39.9h4l-4 7z" fill="#9db0dc" stroke="#5a78b8" stroke-width=".7"/><path d="M266.00000000000006 39.3l4 7.4h-8z" fill="#9db0dc" stroke="#5a78b8" stroke-width=".7"/><path d="M266.00000000000006 40.9v5.6" stroke="#dfe6f6" stroke-width=".7"/><path d="M275.2 43.099999999999994l8-3.6v7.4z" fill="#9db0dc" stroke="#5a78b8" stroke-width=".7"/><path d="M276.8 43.099999999999994h6" stroke="#dfe6f6" stroke-width=".7"/><path d="M294 39.5h-2.4v8h2.4M298.6 39.5h2.400v8h-2.400" fill="none" stroke="#1c2a3a" stroke-width="1.1"/><circle cx="309.2" cy="42.3" r="3.8" fill="#dff2f8" stroke="#16222e" stroke-width="1.2"/><path d="M307.2 42.3h4M309.2 40.099999999999994v4.4" stroke="#16222e" stroke-width="1"/><path d="M312 45.5l3.4 3.8" stroke="#28389c" stroke-width="1.7"/><path d="M406.4 47.699999999999996v-8.4h3.2l1 1.2h5.2v7.2z" fill="#f4ec20" stroke="#6a6410" stroke-width=".7"/><rect x="422.4" y="38.5" width="3.6" height="3.2" fill="#20d8e0" stroke="#222" stroke-width=".5"/><rect x="419.4" y="44.699999999999996" width="3.6" height="3.2" fill="#e82020" stroke="#222" stroke-width=".5"/><rect x="425.6" y="44.699999999999996" width="3.6" height="3.2" fill="#20c830" stroke="#222" stroke-width=".5"/><path d="M424.2 41.699999999999996v1.6M421.2 44.699999999999996v-1.4h6.2v1.4" fill="none" stroke="#222" stroke-width=".6"/><rect x="432.6" y="38.9" width="4" height="3.4" fill="#1838d8"/><rect x="439.4" y="40.3" width="3.4" height="3" fill="#f0e820" stroke="#555" stroke-width=".4"/><rect x="439.4" y="44.5" width="3.4" height="3" fill="#20e0e8" stroke="#555" stroke-width=".4"/><path d="M436.6 40.699999999999996h1.6v5.2h1.2M438.2 41.9h1.2" fill="none" stroke="#333" stroke-width=".5"/><g transform="translate(446.2,38.699999999999996) scale(1.02)"><path d="M5 9.2C1.5 6.3 0.3 4.6 0.3 2.9 0.3 1.4 1.4 0.4 2.7 0.4 3.7 0.4 4.5 1 5 1.8 5.5 1 6.3 0.4 7.3 0.4 8.6 0.4 9.7 1.4 9.7 2.9 9.7 4.6 8.5 6.3 5 9.2z" fill="#e8121c" stroke="#8c0a10" stroke-width="0.5"/><ellipse cx="2.9" cy="2.8" rx="1.6" ry="1.2" fill="#fff"/></g><path d="M461 39.3h4.6v3.6h-4.6z" fill="#f4ec40" stroke="#777" stroke-width=".4"/><path d="M465.4 38.9l4 2-3.6 2z" fill="#e020e0"/><path d="M462 44.9h5M465 43.3l3 1.8-3 2" fill="none" stroke="#20b030" stroke-width="1.1"/><path d="M460.6 45.099999999999994h3" stroke="#888" stroke-width=".7" stroke-dasharray="1 .6"/><path d="M474.6 42.3h6.8v5.6h-6.8z" fill="#f2f2ee" stroke="#6a6a6a" stroke-width=".6"/><path d="M475.4 43.9h5M475.4 45.699999999999996h5" stroke="#8a8a8a" stroke-width=".6"/><path d="M477 41.9l2.6-2.8 4 1.2-2.4 2.6z" fill="#f0e020" stroke="#6a6410" stroke-width=".5"/><path d="M488 39.5q1.800-1.400 3.600 0 1.800-1.400 3.600 0v8.400h-7.200z" fill="#20d8e0" stroke="#0a3a44" stroke-width=".9"/><rect x="500.4" y="38.3" width="5.4" height="5.6" fill="#e81818" stroke="#600" stroke-width=".4"/><rect x="503" y="40.5" width="5.4" height="5.6" fill="#18b828" stroke="#040" stroke-width=".4"/><rect x="505.2" y="42.699999999999996" width="5" height="5.4" fill="#1828c8" stroke="#004" stroke-width=".4"/><rect x="514.4" y="38.099999999999994" width="8" height="10.2" fill="#fff" stroke="#111" stroke-width=".9"/><path d="M516 39.9h.01M516 46.5h.01M520.8 39.9h.01M520.8 46.5h.01" stroke="#333" stroke-width="1" stroke-linecap="round"/><path d="M516.4 43.099999999999994l1.2-1 0 2z" fill="#555"/><path d="M556 40.699999999999996h5.600v6h-5.600z" fill="#c2d0ec" stroke="#7388bb" stroke-width=".9"/><path d="M554.2 38.9h2.400v2.400h-2.400zM560.600 45.9h2.400v2.400h-2.400z" fill="#dfe8f8" stroke="#7388bb" stroke-width=".7"/><path d="M557 39.5h5.800v5.800" fill="none" stroke="#7388bb" stroke-width=".7"/><path d="M569 40.699999999999996h5.800v5.600h-5.800z" fill="#d6e0f4" stroke="#7388bb" stroke-width=".9"/><path d="M571 47.5h5.200v-5.200" fill="none" stroke="#7388bb" stroke-width=".9"/><path d="M608.6 38.3v9.6M610 39.099999999999994h3v3.2h-3zM610 43.9h6v3.4h-6z" fill="#bccbe9" stroke="#7d90bc" stroke-width=".9"/><path d="M623.6 39.3h3.6v3.2h-3.6zM621.4 43.9h8v3.4h-8z" fill="#bccbe9" stroke="#7d90bc" stroke-width=".9"/><path d="M642 38.3v9.6M637.4 39.099999999999994h3.2v3.2h-3.2zM634 43.9h6.6v3.4h-6.6z" fill="#bccbe9" stroke="#7d90bc" stroke-width=".9"/><path d="M650.6 38.699999999999996h9.6M651.6 40.099999999999994h3.2v7h-3.2zM656.4 40.099999999999994h3v3.2h-3z" fill="#bccbe9" stroke="#7d90bc" stroke-width=".9"/><path d="M663.6 38.9h3.2v8.6h-3.2zM667.6 41.5h2.8v3h-2.8z" fill="#bccbe9" stroke="#7d90bc" stroke-width=".9"/><path d="M677.6 38.699999999999996h3.2v8h-3.2zM682 43.5h2.8v3.2h-2.8zM677 47.9h8.6" fill="#bccbe9" stroke="#7d90bc" stroke-width=".9"/></g><path d="M13.4 55.0l7.4 7.6" stroke="#1c2430" stroke-width="1"/><path d="M26.8 55.400000000000006l3.4 2.2 2 .4 4 5" fill="none" stroke="#1c2430" stroke-width="1"/><path d="M40.8 63.6q.6-7.6 9-8.6" fill="none" stroke="#1c2430" stroke-width="1"/><path d="M54.6 63.6q-.6-1.6 1.6-3.4 3-2.4 1.6-5.6M58.2 58.6l4.2-1.8" fill="none" stroke="#1c2430" stroke-width="1"/><rect x="67.4" y="56.2" width="9.4" height="6.2" fill="none" stroke="#1c2430" stroke-width="1"/><rect x="81" y="56.2" width="9.6" height="6.2" rx="2" fill="none" stroke="#1c2430" stroke-width="1"/><ellipse cx="99.2" cy="59.300000000000004" rx="4.8" ry="3.1" fill="none" stroke="#1c2430" stroke-width="1"/><path d="M109.6 54.800000000000004h7.2l-7.2 9h7.2z" fill="none" stroke="#1c2430" stroke-width="1"/><ellipse cx="126" cy="59.300000000000004" rx="4.8" ry="3.4" fill="#e6eefb" stroke="#1c2430" stroke-width=".9"/><path d="M123 61.800000000000004l6-5" stroke="#1c2430" stroke-width=".9"/><ellipse cx="139.8" cy="59.300000000000004" rx="5.2" ry="3.4" fill="#e6eefb" stroke="#1c2430" stroke-width=".9"/><path d="M137 59.6l5-1.6v3z" fill="none" stroke="#1c2430" stroke-width=".7"/><path d="M149.4 56.2h7M149.4 59.2h7M149.4 62.2h7" stroke="#8ea0c4" stroke-width=".9"/><rect x="180.2" y="55.800000000000004" width="7.2" height="7.2" fill="#4a4a4a" stroke="#2a2a2a" stroke-width=".6"/><path d="M180.2 57.6h7.2M180.2 59.400000000000006h7.2M180.2 61.2h7.2M182 55.800000000000004v7.2M183.800 55.800000000000004v7.2M185.600 55.800000000000004v7.2" stroke="#8a8a8a" stroke-width=".5"/><path d="M197 55.5v3.600h6M203 55.5v7.800" fill="none" stroke="#1c2430" stroke-width="1.1"/><circle cx="203" cy="60.6" r=".9" fill="#1c2430"/><path d="M211.6 59.6h6.4M215.2 57.2v5" stroke="#8ea0c4" stroke-width=".8"/><path d="M223.6 56.2h5a3.2 3.2 0 0 1 0 6.4h-5z" fill="#f2ec18" stroke="#4a4600" stroke-width=".9"/><path d="M238.4 54.800000000000004v9.4M243 54.800000000000004v9.4" stroke="#1c2430" stroke-width=".9"/><path d="M237 56.400000000000006h7.4M237 59.400000000000006h7.4M237 62.400000000000006h7.4" stroke="#1c2430" stroke-width=".9" stroke-dasharray="2 1.2"/><path d="M254.6 56.2l6.2 2-2 1.2 3 3.2-1.4 1.4-3-3.2-1.4 2z" fill="#e01818" stroke="#500" stroke-width=".6"/><path d="M269.4 60q-1.6-1-1-1.8.8-.6 1.8.4l1 1v-3.4q.6-.8 1.2 0v-1q.7-.8 1.4 0v.6q.7-.8 1.4 0v1q.7-.6 1.2.2v3.6q0 2.4-1.4 4.2h-3.600q-.6-1.800-2.400-3.800z" fill="#fff" stroke="#111" stroke-width=".7"/><path d="M505.6 63.2l6-7.4" stroke="#6f86b8" stroke-width="1.3"/><circle cx="538" cy="58.4" r="3.3" fill="none" stroke="#7f93bd" stroke-width=".9"/><path d="M540.4 61.0l2.4 2.4" stroke="#7f93bd" stroke-width="1.2"/><path d="M536.4 58.4h3.2" stroke="#7f93bd" stroke-width=".7"/><path d="M541.6 64.2h2.4l-1.2 1.2z" fill="#7f93bd"/><path d="M552.3 56.1h8.700M552.3 57.7h6M552.3 59.300000000000004h8.700M552.3 60.9h6M552.3 62.5h8.700" stroke="#50555f" stroke-width="1.35"/><path d="M568.300 56.1h6M566.800 57.7h9M568.300 59.300000000000004h6M566.800 60.9h9M568.300 62.5h6" stroke="#50555f" stroke-width="1.35"/><path d="M580.600 56.1h8.700M583.300 57.7h6M580.600 59.300000000000004h8.700M583.300 60.9h6M580.600 62.5h8.700" stroke="#50555f" stroke-width="1.35"/><path d="M606.8 55.9v8M616.4 55.9v8" stroke="#1c2430" stroke-width="1.3"/><path d="M606.8 56.800000000000004h9.6" stroke="#d020a0" stroke-width="1.2"/><path d="M621.6 56.2l7.600 7.6" stroke="#d020a0" stroke-width="1.1"/><path d="M620.6 57.4l2.400-2.400M627.800 64.8l2.400-2.400" stroke="#1c2430" stroke-width="1"/><circle cx="638.3" cy="59.2" r="4.9" fill="none" stroke="#1c2430" stroke-width="1.1"/><path d="M634.8 55.800000000000004l7 7" stroke="#d020a0" stroke-width="1.1"/></svg><svg width="700" height="466"><path d="M29.6 144.5h13.8" stroke="#241818" stroke-width="1.3" fill="none" /><path d="M32.0 144.5l1.6-1.7h5.6l1.6 1.7-1.6 1.7h-5.6z" stroke="#241818" stroke-width="0.6" fill="#241818" /><path d="M34.6 144.5h.8M37.6 144.5h.8" stroke="#ff8080" stroke-width="0.7" fill="none" /><path d="M53.4 144.5h13.8" stroke="#241818" stroke-width="1.3" fill="none" /><path d="M55.8 144.5l1.6-1.7h5.6l1.6 1.7-1.6 1.7h-5.6z" stroke="#241818" stroke-width="0.6" fill="#241818" /><path d="M58.4 144.5h.8M61.4 144.5h.8" stroke="#ff8080" stroke-width="0.7" fill="none" /><circle cx="84.1" cy="144.3" r="4.9" stroke="#241818" stroke-width="0.8" fill="none"/><path d="M84.1 136.4v3M84.1 149.2v2.4M88.6 143.2h4.8M88.6 145.4h4.8" stroke="#241818" stroke-width="0.8" fill="none" /><path d="M83 138.2h2.2l-1.1 1.6z" stroke="#241818" stroke-width="0.3" fill="#241818" /><path d="M30 192.3h14.6M30 194.9h14.600" stroke="#241818" stroke-width="0.8" fill="none" /><path d="M31.8 188.6v9.4M37 188.6v9.4M42.2 188.6v9.4" stroke="#241818" stroke-width="0.9" fill="none" /><path d="M33.2 190v2.2M34.400 190v2.2M38.400 190v2.2M39.600 190v2.2M43.400 190.4v1.800" stroke="#241818" stroke-width="0.5" fill="none" /><circle cx="60.3" cy="192" r="6.2" stroke="#241818" stroke-width="0.8" fill="none"/><path d="M60.3 187.6v5M56.8 192.7h7M57.9 194.6h4.8M59.1 196.300h2.400" stroke="#241818" stroke-width="0.8" fill="none" /><path d="M76.3 192.7a8.2 7.6 0 0 1 16.4 0zM80.3 192.7v4.6M88.8 192.7v4.600" stroke="#241818" stroke-width="0.8" fill="none" /><path d="M108.2 190.2v9.2" stroke="#241818" stroke-width="1.6" fill="none" /><path d="M107.400 190.200h1.600" stroke="#241818" stroke-width="1.2" fill="none" /><path d="M40.6 236.4l-8.4 6h9.2M37.400 238.8q1.800 1.400 1.600 3.600" stroke="#241818" stroke-width="0.8" fill="none" /><path d="M60.3 249.6v-14.6M57.6 239.8l2.700-4.800 2.700 4.800" stroke="#241818" stroke-width="0.8" fill="none" /><path d="M79 242h10.300M84.100 237v10.200" stroke="#241818" stroke-width="0.8" fill="none" /><path d="M108.6 233.400l-5 8.600 5.400-1.400-5.400 9.600" stroke="#241818" stroke-width="1.2" fill="none" /><path d="M102.800 247.200l.600 3.600 3.200-1.800z" stroke="#241818" stroke-width="0.5" fill="#241818" /><path d="M36.7 282.4v14.600M30.3 301.3v-6.700l12.700 6.400v-6.700" stroke="#241818" stroke-width="0.9" fill="none" /><path d="M55.6 286.3h9.300v9h-9.300zM60.200 295.300v1.700M55.600 289v-1" stroke="#241818" stroke-width="1.0" fill="none" /><path d="M78.4 291h3.600M82 286.700v8.600M87.700 286.700v8.600M82 288.400h5.700v5.200h-5.700zM82 288.400l5.700 5.200M87.700 288.400l-5.700 5.200" stroke="#241818" stroke-width="0.8" fill="none" /><path d="M102 288.600h12.900l-3.500 6h-5.700zM106.400 289.400l4 4.400M110.400 289.400l-4 4.400" stroke="#241818" stroke-width="0.8" fill="none" /><path d="M31.7 338h8.900v4.200h-8.900zM30.400 340.100h12.400M33 337.200h6.300" stroke="#241818" stroke-width="0.9" fill="none" /><path d="M51.3 340.100h15.300" stroke="#241818" stroke-width="1.2" fill="none" /><path d="M54.800 338.200l2.200 3.800M57.200 338.200l-2.200 3.800M60.600 338v4.200M62.600 338v4.200M64 338.600l-1.400 1.500 1.400 1.500" stroke="#241818" stroke-width="0.8" fill="none" /><path d="M79.100 338h10v4.300h-10z" stroke="#241818" stroke-width="1.2" fill="none" /><path d="M80 340.100h10.800M84.600 340.100v2.600" stroke="#241818" stroke-width="0.8" fill="none" /><path d="M108.400 332.700l7 7-7 7-7-7zM108.400 332.700v17.600M105.400 343.400l3 2.600 3-2.600" stroke="#241818" stroke-width="0.8" fill="none" /><path d="M36.300 382.300v11.700M31.400 394h10.300M31.400 392.800v2.400M41.700 392.800v2.400" stroke="#241818" stroke-width="0.9" fill="none" /><path d="M34.900 388.600l1.400-3.600 1.400 3.600z" stroke="#241818" stroke-width="0.7" fill="none" /><path d="M52.300 389h16.300M60.300 381v16M52.300 387.600v2.800M68.600 387.600v2.800M58.900 381h2.800M58.900 397h2.800" stroke="#241818" stroke-width="0.9" fill="none" /><path d="M74.100 389h20.500M74.100 388v2M94.600 388v2M84.400 388v2" stroke="#241818" stroke-width="0.8" fill="none" /><path d="M98.400 389h20.500M98.400 388v2M118.900 388v2M107 389q1.600 1.400 3.200 0" stroke="#241818" stroke-width="0.8" fill="none" /></svg><div style="position:absolute;left:692.7px;top:70px;width:2.2px;height:196px;background:#f6e7b6;"></div><div style="position:absolute;left:692.7px;top:88px;width:2.2px;height:3px;background:#a9c4f0;"></div><div style="position:absolute;left:692.7px;top:102px;width:2.2px;height:2px;background:#a9c4f0;"></div><div style="position:absolute;left:692.7px;top:109px;width:2.2px;height:6px;background:#1a1a80;"></div><div style="position:absolute;left:692.7px;top:133px;width:2.2px;height:7px;background:#a9c4f0;"></div><div style="position:absolute;left:692.7px;top:142px;width:2.2px;height:1px;background:#5a5a30;"></div><div style="position:absolute;left:692.7px;top:155px;width:2.2px;height:5px;background:#a9c4f0;"></div><div style="position:absolute;left:692.7px;top:215px;width:2.2px;height:7px;background:#a9c4f0;"></div>
</body></html>
